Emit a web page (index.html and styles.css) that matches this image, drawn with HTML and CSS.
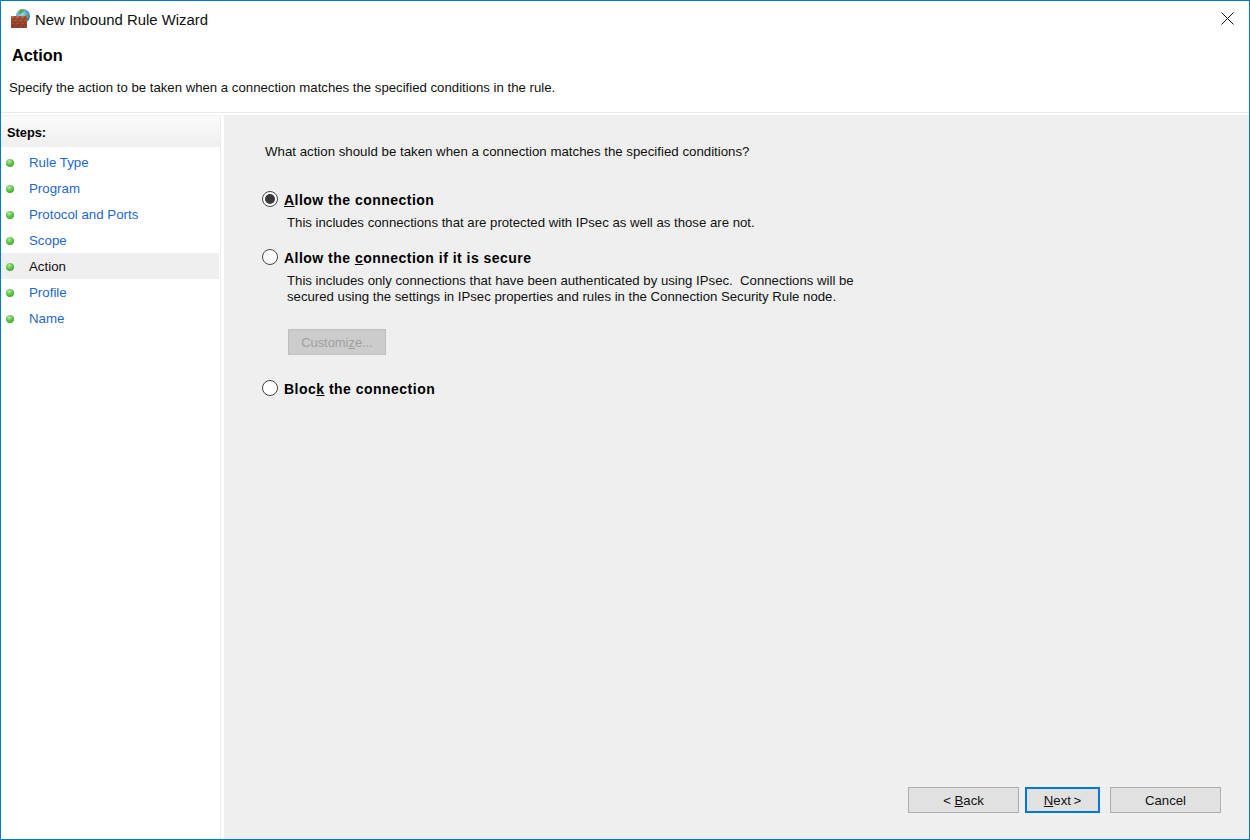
FILE: index.html
```html
<!DOCTYPE html>
<html lang="en">
<head>
<meta charset="utf-8">
<title>New Inbound Rule Wizard</title>
<link rel="stylesheet" href="styles.css">
</head>
<body>
<div class="window">
  <div class="titlebar">
    <svg class="appicon" width="22" height="22" viewBox="0 0 22 22">
      <defs>
        <radialGradient id="globe" cx="40%" cy="35%" r="70%">
          <stop offset="0" stop-color="#a5dcf5"/>
          <stop offset="1" stop-color="#1f6fc0"/>
        </radialGradient>
        <linearGradient id="brick" x1="0" y1="0" x2="0" y2="1">
          <stop offset="0" stop-color="#c4654a"/>
          <stop offset="1" stop-color="#94402c"/>
        </linearGradient>
      </defs>
      <circle cx="13" cy="8" r="7" fill="url(#globe)"/>
      <path d="M9 3c1-2 4-2 5-1s-1 2-2 3-2 2-3 1 0-2 0-3zM16 7c1-1 3-1 3 0s-1 3-2 3-2-2-1-3z" fill="#5cae3c"/>
      <rect x="1" y="8" width="16" height="12" fill="url(#brick)"/>
      <path d="M1 11h16M1 14h16M1 17h16M5 8v3M10 8v3M15 8v3M3 11v3M8 11v3M13 11v3M5 14v3M10 14v3M15 14v3M3 17v3M8 17v3M13 17v3" stroke="#74301f" stroke-width="0.7" fill="none"/>
    </svg>
    <span class="title">New Inbound Rule Wizard</span>
    <svg class="close" width="13" height="13" viewBox="0 0 13 13"><path d="M.5.5l12 12M12.500.5l-12 12" stroke="#111" stroke-width="1" fill="none"/></svg>
  </div>
  <header class="head">
    <h1 class="heading">Action</h1>
    <p class="subheading">Specify the action to be taken when a connection matches the specified conditions in the rule.</p>
  </header>
  <div class="main">
    <nav class="steps">
      <div class="steps-title">Steps:</div>
      <ul class="step-list">
        <li class="step"><span class="dot"></span>Rule Type</li>
        <li class="step"><span class="dot"></span>Program</li>
        <li class="step"><span class="dot"></span>Protocol and Ports</li>
        <li class="step"><span class="dot"></span>Scope</li>
        <li class="step current"><span class="dot"></span>Action</li>
        <li class="step"><span class="dot"></span>Profile</li>
        <li class="step"><span class="dot"></span>Name</li>
      </ul>
    </nav>
    <section class="content">
      <p class="question">What action should be taken when a connection matches the specified conditions?</p>
      <div class="option opt-first">
        <span class="radio checked"></span>
        <span class="label"><u>A</u>llow the connection</span>
      </div>
      <p class="desc">This includes connections that are protected with IPsec as well as those are not.</p>
      <div class="option opt-second">
        <span class="radio"></span>
        <span class="label">Allow the <u>c</u>onnection if it is secure</span>
      </div>
      <p class="desc">This includes only connections that have been authenticated by using IPsec.&nbsp; Connections will be<br>secured using the settings in IPsec properties and rules in the Connection Security Rule node.</p>
      <div class="customize">Customi<u>z</u>e...</div>
      <div class="option opt-third">
        <span class="radio"></span>
        <span class="label">Bloc<u>k</u> the connection</span>
      </div>
      <div class="buttons">
        <div class="btn btn-back">&lt; <u>B</u>ack</div>
        <div class="btn btn-next"><u>N</u>ext<span class="thin"> </span>&gt;</div>
        <div class="btn btn-cancel">Cancel</div>
      </div>
    </section>
  </div>
</div>
</body>
</html>
```
FILE: styles.css
```css
* { box-sizing: border-box; }
html, body { margin: 0; padding: 0; }
body {
  width: 1250px;
  height: 840px;
  overflow: hidden;
  background: #fff;
  font-family: "Liberation Sans", Arial, sans-serif;
  font-size: 13.2px;
  color: #111;
}
.window {
  width: 1250px;
  height: 840px;
  border: 1px solid #0078d7;
  display: flex;
  flex-direction: column;
  background: #fff;
}
.titlebar {
  height: 37px;
  flex: none;
  display: flex;
  align-items: center;
  padding: 0 15px 0 9px;
}
.appicon { flex: none; margin-top: -1px; }
.title {
  margin-left: 3px;
  font-size: 14.9px;
  color: #111;
}
.close { margin-left: auto; margin-top: -2px; }
.head {
  height: 75px;
  flex: none;
  border-bottom: 1px solid #e8e8e8;
}
.heading {
  margin: 0;
  padding: 7px 0 0 11px;
  font-size: 16.3px;
  line-height: 20px;
  font-weight: 700;
  color: #000;
}
.subheading {
  margin: 15px 0 0;
  padding-left: 8px;
  line-height: 16px;
}
.main {
  flex: 1;
  min-height: 0;
  display: flex;
  padding-top: 2px;
}
.steps {
  width: 220px;
  flex: none;
  border-top: 1px solid #f0f0f0;
  border-right: 1px solid #ececec;
  background: #fff;
}
.steps-title {
  height: 31px;
  padding: 8px 0 0 6px;
  font-size: 12.800px;
  line-height: 17px;
  font-weight: 700;
  color: #000;
  background: linear-gradient(#fbfbfb, #efefef);
}
.step-list {
  list-style: none;
  margin: 2px 0 0;
  padding: 0;
  font-size: 13.3px;
}
.step {
  height: 26px;
  margin-right: 1px;
  padding-top: 1px;
  display: flex;
  align-items: center;
  color: #1e68cc;
}
.step.current { background: #efefef; color: #111; }
.dot {
  width: 8px;
  height: 8px;
  margin: 1px 15px 0 5px;
  border-radius: 50%;
  flex: none;
  background: radial-gradient(circle at 40% 30%, #b5e6a0, #4fbb3a 55%, #3a9a2c);
}
.content {
  flex: 1;
  margin-left: 3px;
  background: #efefef;
  display: flex;
  flex-direction: column;
  padding: 0 28px 26px 37px;
}
.question {
  margin: 29px 0 0 4px;
  font-size: 13.28px;
  line-height: 16px;
}
.option {
  display: flex;
  align-items: center;
  height: 18px;
}
.opt-first { margin-top: 31px; }
.opt-second { margin-top: 18px; }
.opt-third { margin-top: 25px; }
.radio {
  width: 16px;
  height: 16px;
  flex: none;
  margin: -2px 6px 0 1px;
  border-radius: 50%;
  border: 1px solid #444;
  background: #fff;
  display: flex;
  align-items: center;
  justify-content: center;
}
.radio.checked::after {
  content: "";
  width: 10px;
  height: 10px;
  border-radius: 50%;
  background: #3a3a3a;
}
.label {
  font-size: 14px;
  font-weight: 700;
  color: #000;
  letter-spacing: 0.48px;
}
.desc {
  margin: 6px 0 0 26px;
  line-height: 16px;
}
.customize {
  width: 98px;
  height: 26px;
  margin: 24px 0 0 27px;
  border: 1px solid #bfbfbf;
  background: #cccccc;
  color: #a0a0a0;
  font-size: 12.9px;
  text-align: center;
  line-height: 25px;
}
.buttons {
  margin-top: auto;
  display: flex;
  justify-content: flex-end;
}
.btn {
  height: 26px;
  border: 1px solid #adadad;
  background: #e1e1e1;
  color: #111;
  text-align: center;
  line-height: 25px;
}
.btn-back { width: 111px; }
.btn-next {
  width: 75px;
  margin-left: 6px;
  border: 2px solid #0078d7;
  line-height: 23px;
}
.thin { font-size: 9px; }
.btn-cancel { width: 111px; margin-left: 10px; }
```
